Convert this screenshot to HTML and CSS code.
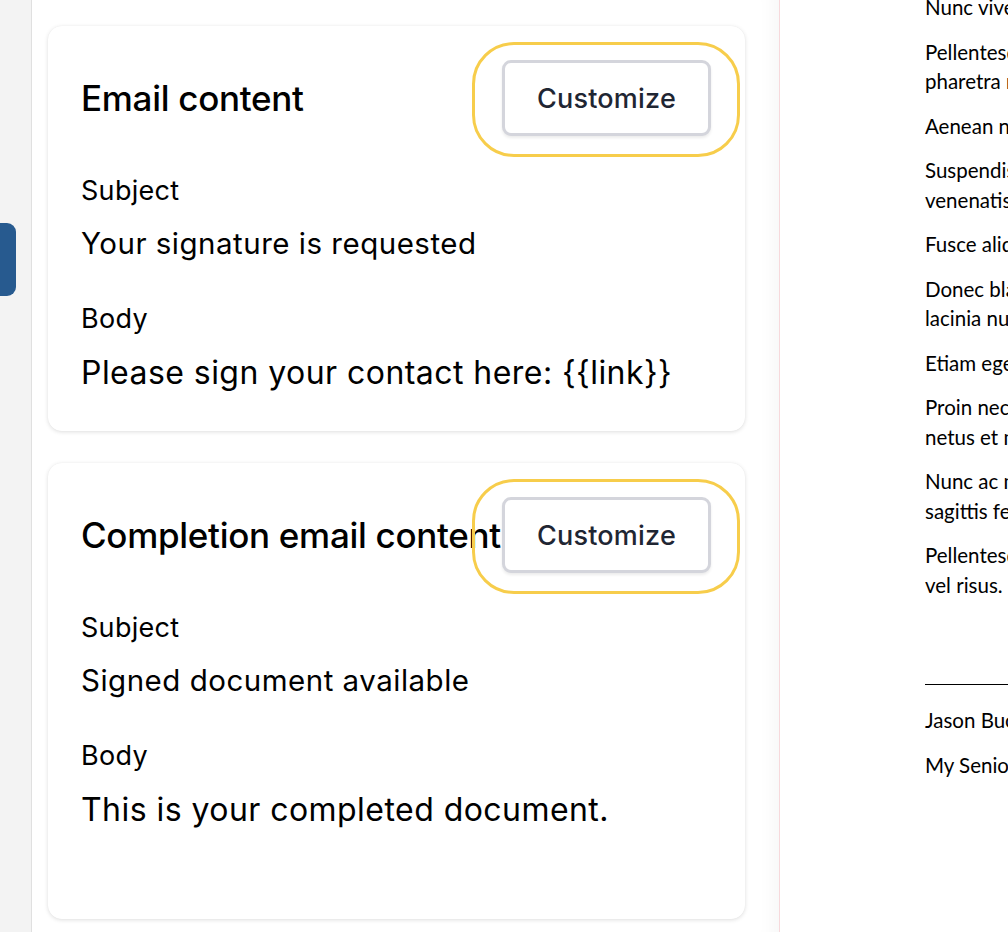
FILE: index.html
```html
<!DOCTYPE html>
<html lang="en">
<head>
  <meta charset="UTF-8">
  <meta name="viewport" content="width=device-width, initial-scale=1">
  <title>Email settings</title>
  <link rel="stylesheet" href="styles.css">
</head>
<body>
  <!-- Left rail -->
  <div class="rail">
    <div class="rail-tab"></div>
  </div>

  <!-- Settings panel -->
  <div class="panel">
    <div class="card">
      <div class="card-head">
        <h2>Email content</h2>
        <button class="btn-customize">Customize</button>
      </div>
      <p class="field-label">Subject</p>
      <p class="field-value">Your signature is requested</p>
      <p class="field-label">Body</p>
      <p class="field-value field-body">Please sign your contact here: {{link}}</p>
    </div>

    <div class="card card-tall">
      <div class="card-head">
        <h2>Completion email content</h2>
        <button class="btn-customize">Customize</button>
      </div>
      <p class="field-label">Subject</p>
      <p class="field-value">Signed document available</p>
      <p class="field-label">Body</p>
      <p class="field-value field-body">This is your completed document.</p>
    </div>
  </div>

  <!-- Document preview -->
  <div class="doc">
    <div class="doc-page">
      <p>Nunc viverra imperdiet enim. Fusce est. Vivamus a tellus.</p>
      <p>Pellentesque habitant morbi tristique senectus et netus et malesuada fames ac turpis egestas. Proin<br>pharetra nonummy pede. Mauris et orci.</p>
      <p>Aenean nec lorem. In porttitor. Donec laoreet nonummy augue.</p>
      <p>Suspendisse dui purus, scelerisque at, vulputate vitae, pretium mattis, nunc. Mauris eget neque at sem<br>venenatis eleifend. Ut nonummy.</p>
      <p>Fusce aliquet pede non pede. Suspendisse dapibus lorem pellentesque magna. Integer nulla.</p>
      <p>Donec blandit feugiat ligula. Donec hendrerit, felis et imperdiet euismod, purus ipsum pretium metus, in<br>lacinia nulla nisl eget sapien.</p>
      <p>Etiam eget dui. Aliquam erat volutpat. Sed at lorem in nunc porta tristique.</p>
      <p>Proin nec augue. Quisque aliquam tempor magna. Pellentesque habitant morbi tristique senectus et<br>netus et malesuada fames ac turpis egestas.</p>
      <p>Nunc ac magna. Maecenas odio dolor, vulputate vel, auctor ac, accumsan id, felis. Pellentesque cursus<br>sagittis felis.</p>
      <p>Pellentesque porttitor, velit lacinia egestas auctor, diam eros tempus arcu, nec vulputate augue magna<br>vel risus.</p>

      <div class="sign-line"></div>
      <p>Jason Buckley</p>
      <p>My Senior Title</p>
    </div>
  </div>
</body>
</html>
```

FILE: styles.css
```css
/* General Reset */
* {
  margin: 0;
  padding: 0;
  box-sizing: border-box;
}

body {
  font-family: Inter, 'Noto Sans', sans-serif;
  background-color: #ffffff;
  color: #000;
  display: flex;
  height: 932px;
  overflow: hidden;
}

/* Left rail */
.rail {
  width: 32px;
  flex-shrink: 0;
  background-color: #f3f3f3;
  border-right: 1px solid #e0e0e0;
  padding-top: 223px;
}

.rail-tab {
  width: 16px;
  height: 73px;
  background-color: #275a8f;
  border-radius: 0 9px 9px 0;
}

/* Settings panel */
.panel {
  width: 748px;
  flex-shrink: 0;
  background-color: #fff;
  padding: 26px 34px 0 16px;
  border-right: 1px solid #f7d9dc;
  box-shadow: inset -22px 0 18px -16px rgba(0, 0, 0, 0.035);
}

.card {
  width: 697px;
  background: #fff;
  border-radius: 14px;
  box-shadow: 0 1px 4px rgba(0, 0, 0, 0.13), 0 0 1px rgba(0, 0, 0, 0.06);
  padding: 34px 34px 37px 33px;
  margin-bottom: 32px;
}

.card-tall {
  padding-bottom: 88px;
}

.card-head {
  display: flex;
  align-items: center;
  justify-content: space-between;
  height: 76px;
  margin-bottom: 38px;
}

.card-head h2 {
  font-size: 35px;
  font-weight: 500;
  letter-spacing: -0.3px;
  white-space: nowrap;
}

.btn-customize {
  position: relative;
  flex-shrink: 0;
  width: 209px;
  height: 76px;
  background: #fff;
  border: 3px solid #d4d5dc;
  border-radius: 9px;
  box-shadow: 0 2px 3px rgba(0, 0, 0, 0.08);
  font-family: Inter, sans-serif;
  font-size: 27px;
  font-weight: 500;
  letter-spacing: 0.2px;
  color: #1f2633;
  cursor: pointer;
}

/* Focus ring around the button */
.btn-customize::after {
  content: "";
  position: absolute;
  top: -21px;
  bottom: -24px;
  left: -33px;
  right: -32px;
  border: 3px solid #f7cd4b;
  border-radius: 42px;
}

.field-label {
  font-size: 27px;
  line-height: 33px;
  letter-spacing: 0.3px;
  margin-bottom: 16px;
}

.field-value {
  font-size: 29.5px;
  line-height: 40px;
  letter-spacing: 0.5px;
  margin-bottom: 39px;
}

.field-body {
  font-size: 32px;
  line-height: 42px;
  letter-spacing: 0.45px;
  margin-top: 17px;
  margin-bottom: 0;
}

/* Document preview */
.doc {
  flex: 1;
  overflow: hidden;
  background: #fff;
}

.doc-page {
  margin: -7px 0 0 145px;
  font-family: Lato, 'Open Sans', sans-serif;
  font-size: 20.5px;
  line-height: 29.5px;
  white-space: nowrap;
}

.doc-page p {
  margin-bottom: 15px;
}

.sign-line {
  width: 300px;
  border-top: 1px solid #000;
  margin: 84px 0 21px;
}
```
